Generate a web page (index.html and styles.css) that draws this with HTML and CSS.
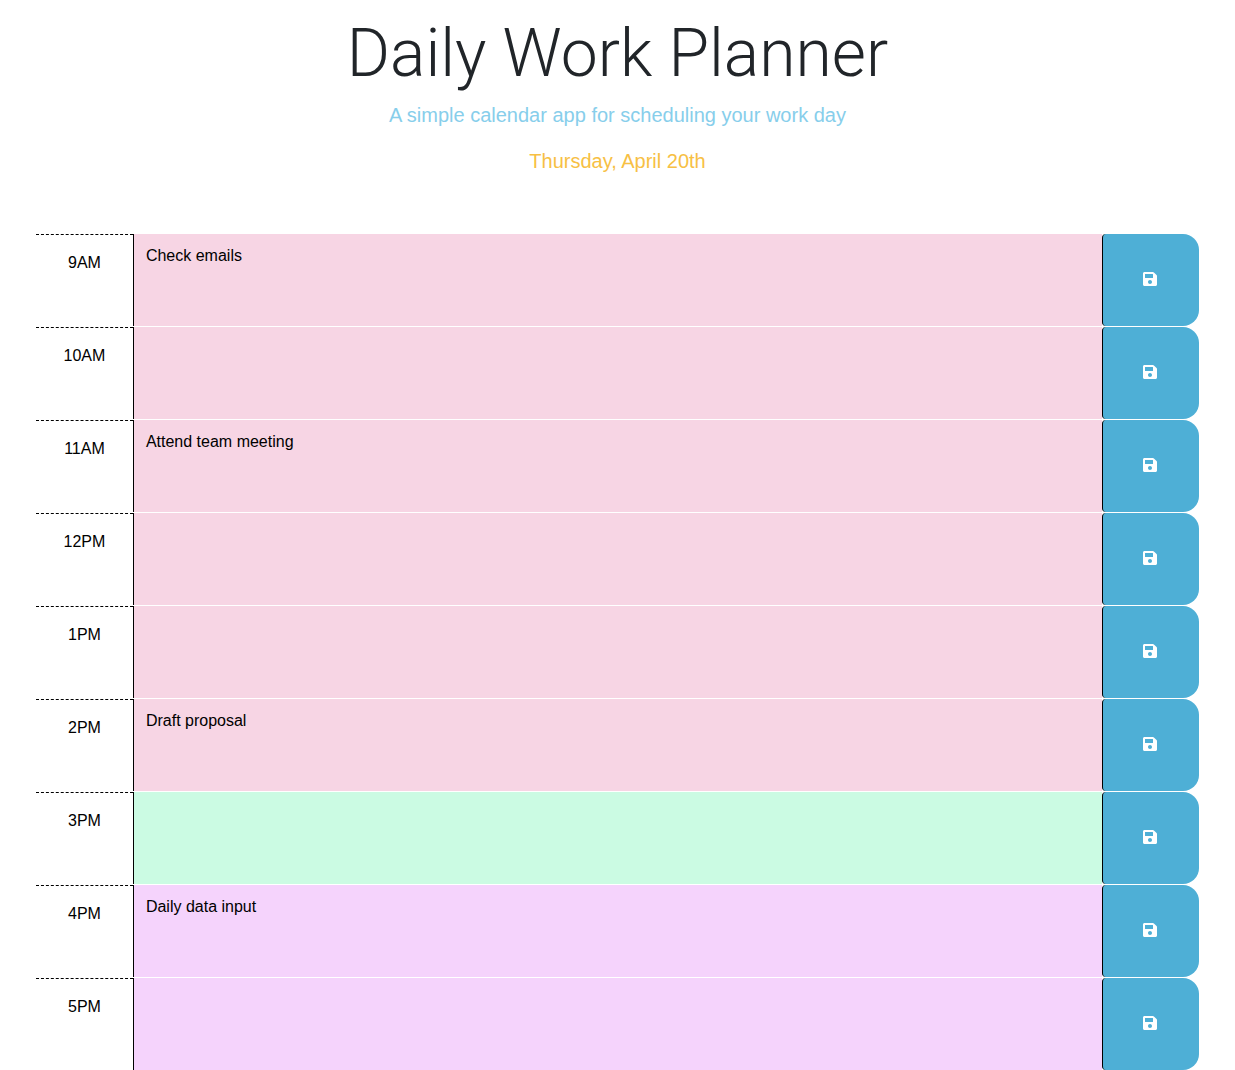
FILE: index.html
```html
<!DOCTYPE html>
<html lang="en">
<head>
  <meta charset="utf-8">
  <meta name="viewport" content="width=device-width, initial-scale=1">
  <title>Daily Work Planner</title>
  <link rel="stylesheet" href="styles.css">
</head>
<body>
  <svg class="sprite" aria-hidden="true">
    <symbol id="save" viewBox="0 0 448 512">
      <path d="M433.941 129.941l-83.882-83.882A48 48 0 0 0 316.118 32H48C21.49 32 0 53.49 0 80v352c0 26.51 21.49 48 48 48h352c26.51 0 48-21.49 48-48V163.882a48 48 0 0 0-14.059-33.941zM224 416c-35.346 0-64-28.654-64-64 0-35.346 28.654-64 64-64s64 28.654 64 64c0 35.346-28.654 64-64 64zm96-304.52V212c0 6.627-5.373 12-12 12H76c-6.627 0-12-5.373-12-12V108c0-6.627 5.373-12 12-12h228.52c3.183 0 6.235 1.264 8.485 3.515l3.48 3.48A11.996 11.996 0 0 1 320 111.48z"/>
    </symbol>
  </svg>
  <header class="header">
    <h1 class="title">Daily Work Planner</h1>
    <p class="lead tagline">A simple calendar app for scheduling your work day</p>
    <p class="lead today">Thursday, April 20th</p>
  </header>
  <main class="planner">
    <div class="time-block past">
      <label class="hour" for="hour-9">9AM</label>
      <textarea class="description" id="hour-9">Check emails</textarea>
      <button class="save" type="button" aria-label="Save 9AM"><svg class="icon"><use href="#save"/></svg></button>
    </div>
    <div class="time-block past">
      <label class="hour" for="hour-10">10AM</label>
      <textarea class="description" id="hour-10"></textarea>
      <button class="save" type="button" aria-label="Save 10AM"><svg class="icon"><use href="#save"/></svg></button>
    </div>
    <div class="time-block past">
      <label class="hour" for="hour-11">11AM</label>
      <textarea class="description" id="hour-11">Attend team meeting</textarea>
      <button class="save" type="button" aria-label="Save 11AM"><svg class="icon"><use href="#save"/></svg></button>
    </div>
    <div class="time-block past">
      <label class="hour" for="hour-12">12PM</label>
      <textarea class="description" id="hour-12"></textarea>
      <button class="save" type="button" aria-label="Save 12PM"><svg class="icon"><use href="#save"/></svg></button>
    </div>
    <div class="time-block past">
      <label class="hour" for="hour-13">1PM</label>
      <textarea class="description" id="hour-13"></textarea>
      <button class="save" type="button" aria-label="Save 1PM"><svg class="icon"><use href="#save"/></svg></button>
    </div>
    <div class="time-block past">
      <label class="hour" for="hour-14">2PM</label>
      <textarea class="description" id="hour-14">Draft proposal</textarea>
      <button class="save" type="button" aria-label="Save 2PM"><svg class="icon"><use href="#save"/></svg></button>
    </div>
    <div class="time-block present">
      <label class="hour" for="hour-15">3PM</label>
      <textarea class="description" id="hour-15"></textarea>
      <button class="save" type="button" aria-label="Save 3PM"><svg class="icon"><use href="#save"/></svg></button>
    </div>
    <div class="time-block future">
      <label class="hour" for="hour-16">4PM</label>
      <textarea class="description" id="hour-16">Daily data input</textarea>
      <button class="save" type="button" aria-label="Save 4PM"><svg class="icon"><use href="#save"/></svg></button>
    </div>
    <div class="time-block future">
      <label class="hour" for="hour-17">5PM</label>
      <textarea class="description" id="hour-17"></textarea>
      <button class="save" type="button" aria-label="Save 5PM"><svg class="icon"><use href="#save"/></svg></button>
    </div>
  </main>
</body>
</html>
```
FILE: styles.css
```css
* {
  box-sizing: border-box;
}

body {
  margin: 0;
  background: #fff;
  color: #212529;
  font-family: "Helvetica Neue", "Liberation Sans", Arial, sans-serif;
  font-size: 16px;
  line-height: 24px;
}

.sprite {
  display: none;
}

.header {
  padding: 16px 24px 58px;
  text-align: center;
}

.title {
  margin: 0 0 8px;
  font-family: Roboto, sans-serif;
  font-size: 66px;
  font-weight: 300;
  line-height: 76px;
}

.lead {
  margin: 0 0 16px;
  font-size: 20px;
  font-weight: 300;
  line-height: 30px;
}

.tagline {
  color: #87ceeb;
}

.today {
  margin: 0;
  color: #f7c044;
}

.planner {
  display: flex;
  flex-direction: column;
  gap: 1px;
  padding: 0 36px;
}

.time-block {
  display: grid;
  grid-template-columns: 1fr 10fr 1fr;
  min-height: 92px;
}

.hour {
  padding-top: 16px;
  border-top: 1px dashed #000;
  color: #000;
  text-align: center;
}

.description {
  display: block;
  width: 100%;
  height: 100%;
  margin: 0;
  padding: 10px 12px;
  border: 0;
  border-left: 1px solid #000;
  border-radius: 0;
  outline: 0;
  overflow: hidden;
  resize: none;
  color: #000;
  font: inherit;
}

.past .description {
  background: #f7d5e4;
}

.present .description {
  background: #cbfbe3;
}

.future .description {
  background: #f5d3fc;
}

.save {
  display: flex;
  align-items: center;
  justify-content: center;
  padding: 0 2px 2px 0;
  border: 0;
  border-left: 1px solid #000;
  border-radius: 4px 16px 16px 4px;
  background: #4eafd6;
  color: #fff;
  cursor: pointer;
}

.icon {
  width: 14px;
  height: 16px;
  fill: currentColor;
}
```
